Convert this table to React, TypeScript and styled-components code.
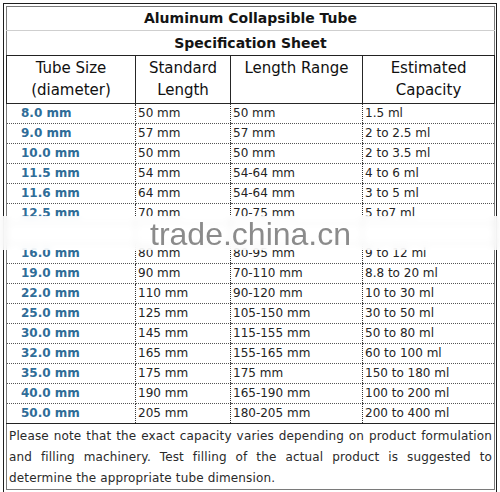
import React from "react";
import styled, { createGlobalStyle } from "styled-components";

const GlobalStyle = createGlobalStyle`
  html, body { margin: 0; padding: 0; background: #ffffff; }
  body { font-family: "DejaVu Sans", Verdana, sans-serif; }
`;

const Page = styled.div`
  position: relative;
  width: 500px;
  height: 492px;
  padding: 3px 3px 0 3px;
  box-sizing: border-box;
  background: #fff;
`;

const Frame = styled.div`
  border: 1px solid #1e1e1e;
  padding: 2px;
  width: 494px;
  box-sizing: border-box;
`;

const Table = styled.table`
  width: 100%;
  border-collapse: collapse;
  table-layout: fixed;
  border: 1px solid #7a7a7a;
  color: #1c1c1c;
`;

const TitleCell = styled.td<{ $strong?: boolean }>`
  text-align: center;
  font-size: 14px;
  font-weight: bold;
  line-height: ${(p) => (p.$strong ? 24 : 23)}px;
  height: ${(p) => (p.$strong ? 24 : 23)}px;
  padding: 0;
  color: #141414;
  border-bottom: 1px solid ${(p) => (p.$strong ? "#222" : "#cfcfcf")};
`;

const HeadCell = styled.th`
  font-weight: normal;
  font-size: 15px;
  line-height: 22px;
  height: 46px;
  padding: 1px 0 0 0;
  vertical-align: top;
  text-align: center;
  color: #101010;
  border: 1px solid #262626;
`;

const SizeCell = styled.td`
  font-size: 12px;
  font-weight: bold;
  color: #2f6d98;
  height: 19px;
  line-height: 19px;
  padding: 0 0 0 14px;
  white-space: nowrap;
  border-right: 1px dotted #333;
  border-bottom: 1px dotted #555;
`;

const DataCell = styled.td`
  font-size: 12px;
  color: #242424;
  height: 19px;
  line-height: 19px;
  padding: 0 0 0 2px;
  white-space: nowrap;
  border-left: 1px dotted #333;
  border-bottom: 1px dotted #555;
`;

const Row = styled.tr<{ $last?: boolean }>`
  & > td {
    ${(p) => (p.$last ? "border-bottom: 1px solid #222;" : "")}
  }
`;

const NoteCell = styled.td`
  font-size: 12px;
  line-height: 21px;
  letter-spacing: 0.15px;
  color: #2a2a2a;
  text-align: justify;
  padding: 2px 2px 0 2px;
  height: 58px;
  vertical-align: top;
`;

const Band = styled.div`
  position: absolute;
  left: 0;
  right: 0;
  top: 216px;
  height: 34px;
  background: rgba(255, 255, 255, 0.82);
  backdrop-filter: blur(3px);
`;

const Watermark = styled.div`
  position: absolute;
  left: 150px;
  top: 218px;
  font-family: "Liberation Sans", Arial, sans-serif;
  font-size: 32px;
  line-height: 32px;
  color: rgba(110, 110, 110, 0.8);
  filter: blur(0.5px);
  white-space: nowrap;
`;

type R = [string, string, string, string];

const rows: R[] = [
  ["8.0 mm", "50 mm", "50 mm", "1.5 ml"],
  ["9.0 mm", "57 mm", "57 mm", "2 to 2.5 ml"],
  ["10.0 mm", "50 mm", "50 mm", "2 to 3.5 ml"],
  ["11.5 mm", "54 mm", "54-64 mm", "4 to 6 ml"],
  ["11.6 mm", "64 mm", "54-64 mm", "3 to 5 ml"],
  ["12.5 mm", "70 mm", "70-75 mm", "5 to7 ml"],
  ["", "", "", ""],
  ["16.0 mm", "80 mm", "80-95 mm", "9 to 12 ml"],
  ["19.0 mm", "90 mm", "70-110 mm", "8.8 to 20 ml"],
  ["22.0 mm", "110 mm", "90-120 mm", "10 to 30 ml"],
  ["25.0 mm", "125 mm", "105-150 mm", "30 to 50 ml"],
  ["30.0 mm", "145 mm", "115-155 mm", "50 to 80 ml"],
  ["32.0 mm", "165 mm", "155-165 mm", "60 to 100 ml"],
  ["35.0 mm", "175 mm", "175 mm", "150 to 180 ml"],
  ["40.0 mm", "190 mm", "165-190 mm", "100 to 200 ml"],
  ["50.0 mm", "205 mm", "180-205 mm", "200 to 400 ml"],
];

export default function App() {
  return (
    <>
      <GlobalStyle />
      <Page>
        <Frame>
          <Table>
            <colgroup>
              <col style={{ width: 129 }} />
              <col style={{ width: 95 }} />
              <col style={{ width: 132 }} />
              <col style={{ width: 132 }} />
            </colgroup>
            <tbody>
              <tr>
                <TitleCell colSpan={4}>Aluminum Collapsible Tube</TitleCell>
              </tr>
              <tr>
                <TitleCell colSpan={4} $strong>
                  Specification Sheet
                </TitleCell>
              </tr>
              <tr>
                <HeadCell>
                  Tube Size
                  <br />
                  (diameter)
                </HeadCell>
                <HeadCell>
                  Standard
                  <br />
                  Length
                </HeadCell>
                <HeadCell>Length Range</HeadCell>
                <HeadCell>
                  Estimated
                  <br />
                  Capacity
                </HeadCell>
              </tr>
              {rows.map((r, i) => (
                <Row key={i} $last={i === rows.length - 1}>
                  <SizeCell>{r[0]}</SizeCell>
                  <DataCell>{r[1]}</DataCell>
                  <DataCell>{r[2]}</DataCell>
                  <DataCell>{r[3]}</DataCell>
                </Row>
              ))}
              <tr>
                <NoteCell colSpan={4}>
                  Please note that the exact capacity varies depending on
                  product formulation and filling machinery. Test filling of the
                  actual product is suggested to determine the appropriate tube
                  dimension.
                </NoteCell>
              </tr>
            </tbody>
          </Table>
        </Frame>
        <Band />
        <Watermark>trade.china.cn</Watermark>
      </Page>
    </>
  );
}
